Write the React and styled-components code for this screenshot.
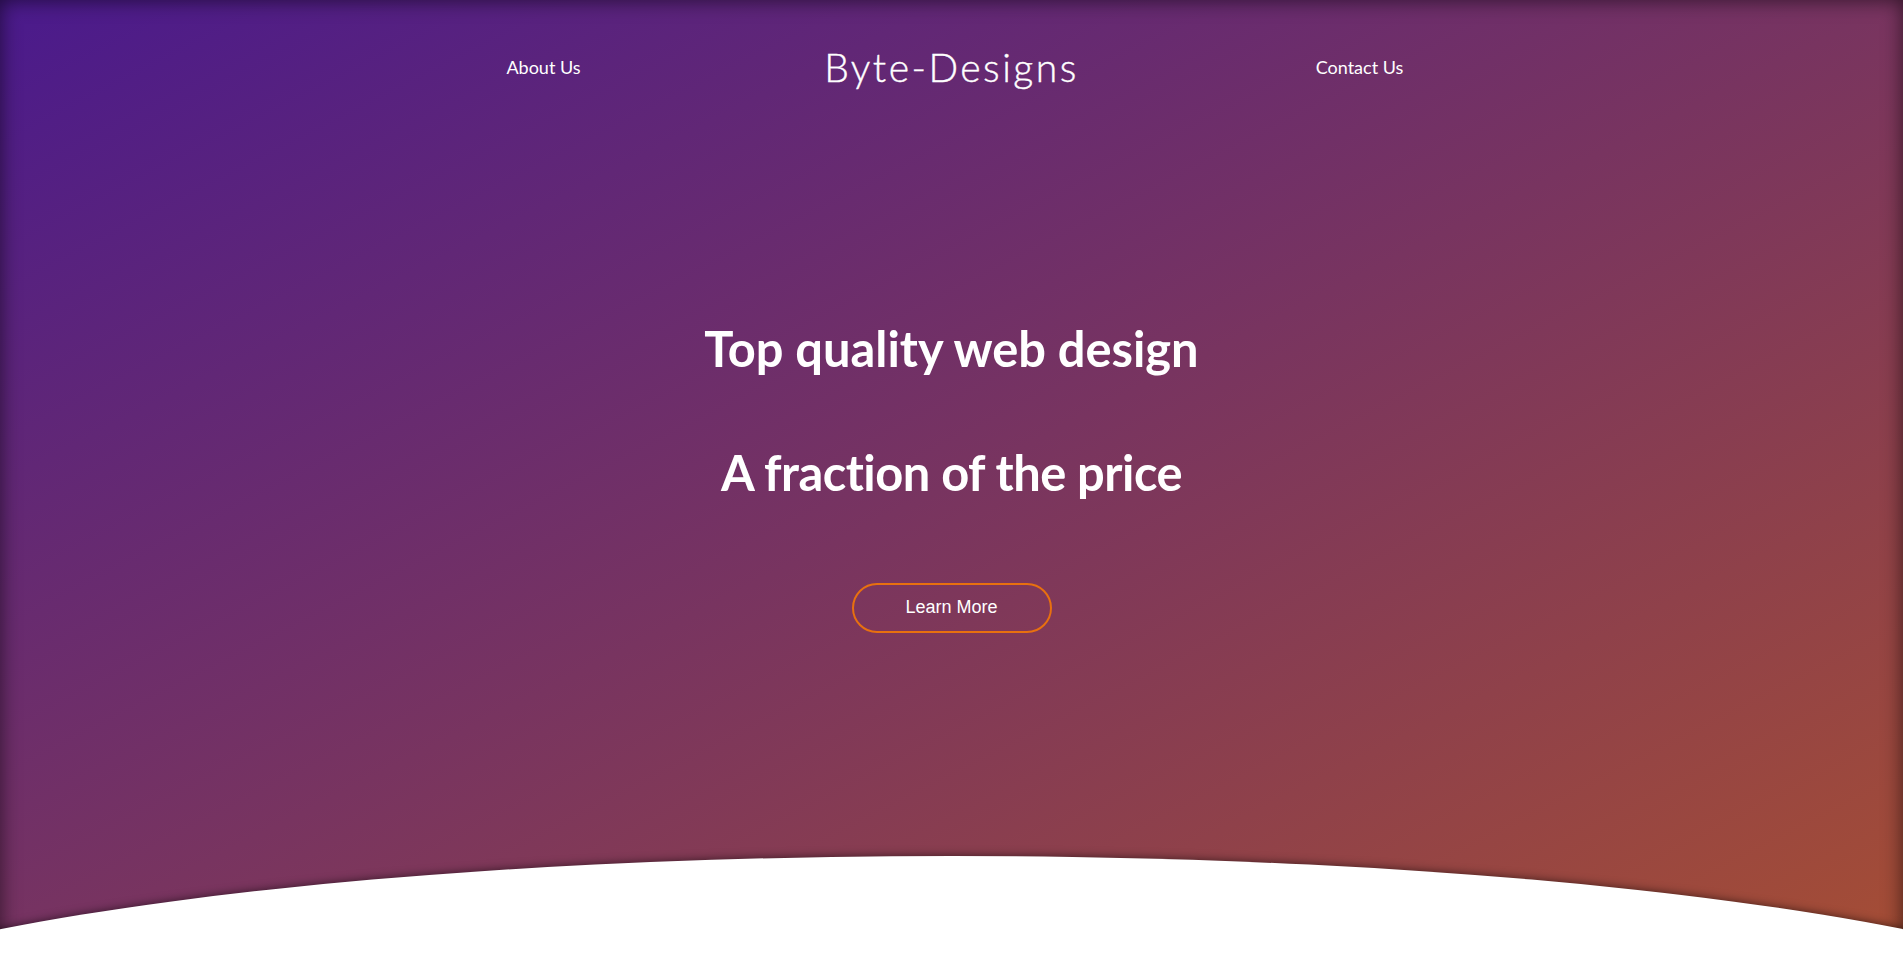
import React from "react";
import styled, { createGlobalStyle } from "styled-components";

const Global = createGlobalStyle`
  html, body { margin: 0; padding: 0; background: #fff; }
  * { box-sizing: border-box; }
`;

const Hero = styled.header`
  position: relative;
  height: 968px;
  overflow: hidden;
  background: linear-gradient(to bottom right, #4a1a8c, #a64e34);
  box-shadow: inset 0 0 20px rgba(0, 0, 0, 0.6);
  font-family: Lato, "Noto Sans", sans-serif;
  color: #fff;
  &::after {
    content: "";
    position: absolute;
    left: 50%;
    top: 856px;
    width: 2460px;
    height: 400px;
    transform: translateX(-50%);
    border-radius: 50%;
    background: #fff;
    box-shadow: 0 0 10px rgba(0, 0, 0, 0.6);
  }
`;

const Nav = styled.nav`
  display: grid;
  grid-template-columns: repeat(3, 408px);
  justify-content: center;
  align-items: center;
  padding-top: 40px;
  height: 94px;
`;

const NavLink = styled.a`
  justify-self: center;
  color: #fff;
  text-decoration: none;
  font-size: 18px;
`;

const Logo = styled.h1`
  justify-self: center;
  margin: 0;
  font-size: 39px;
  font-weight: 300;
  letter-spacing: 2.5px;
  -webkit-text-stroke: 0.4px #fff;
`;

const Main = styled.main`
  display: flex;
  flex-direction: column;
  align-items: center;
  padding-top: 230px;
`;

const Title = styled.h2`
  margin: 0;
  font-size: 48.8px;
  font-weight: 700;
  line-height: 1;
  letter-spacing: ${(p) => p.$tight ? "-0.5px" : "0"};
  & + & { margin-top: 75px; }
`;

const Button = styled.a`
  margin-top: 86px;
  width: 200px;
  height: 50px;
  display: flex;
  align-items: center;
  justify-content: center;
  border: 2px solid #e8700f;
  border-radius: 25px;
  color: #fff;
  text-decoration: none;
  font-family: "Liberation Sans", Arial, sans-serif;
  font-size: 18px;
`;

export default function App() {
  return (
    <>
      <Global />
      <Hero>
        <Nav>
          <NavLink href="#">About Us</NavLink>
          <Logo>Byte-Designs</Logo>
          <NavLink href="#">Contact Us</NavLink>
        </Nav>
        <Main>
          <Title>Top quality web design</Title>
          <Title $tight>A fraction of the price</Title>
          <Button href="#">Learn More</Button>
        </Main>
      </Hero>
    </>
  );
}
